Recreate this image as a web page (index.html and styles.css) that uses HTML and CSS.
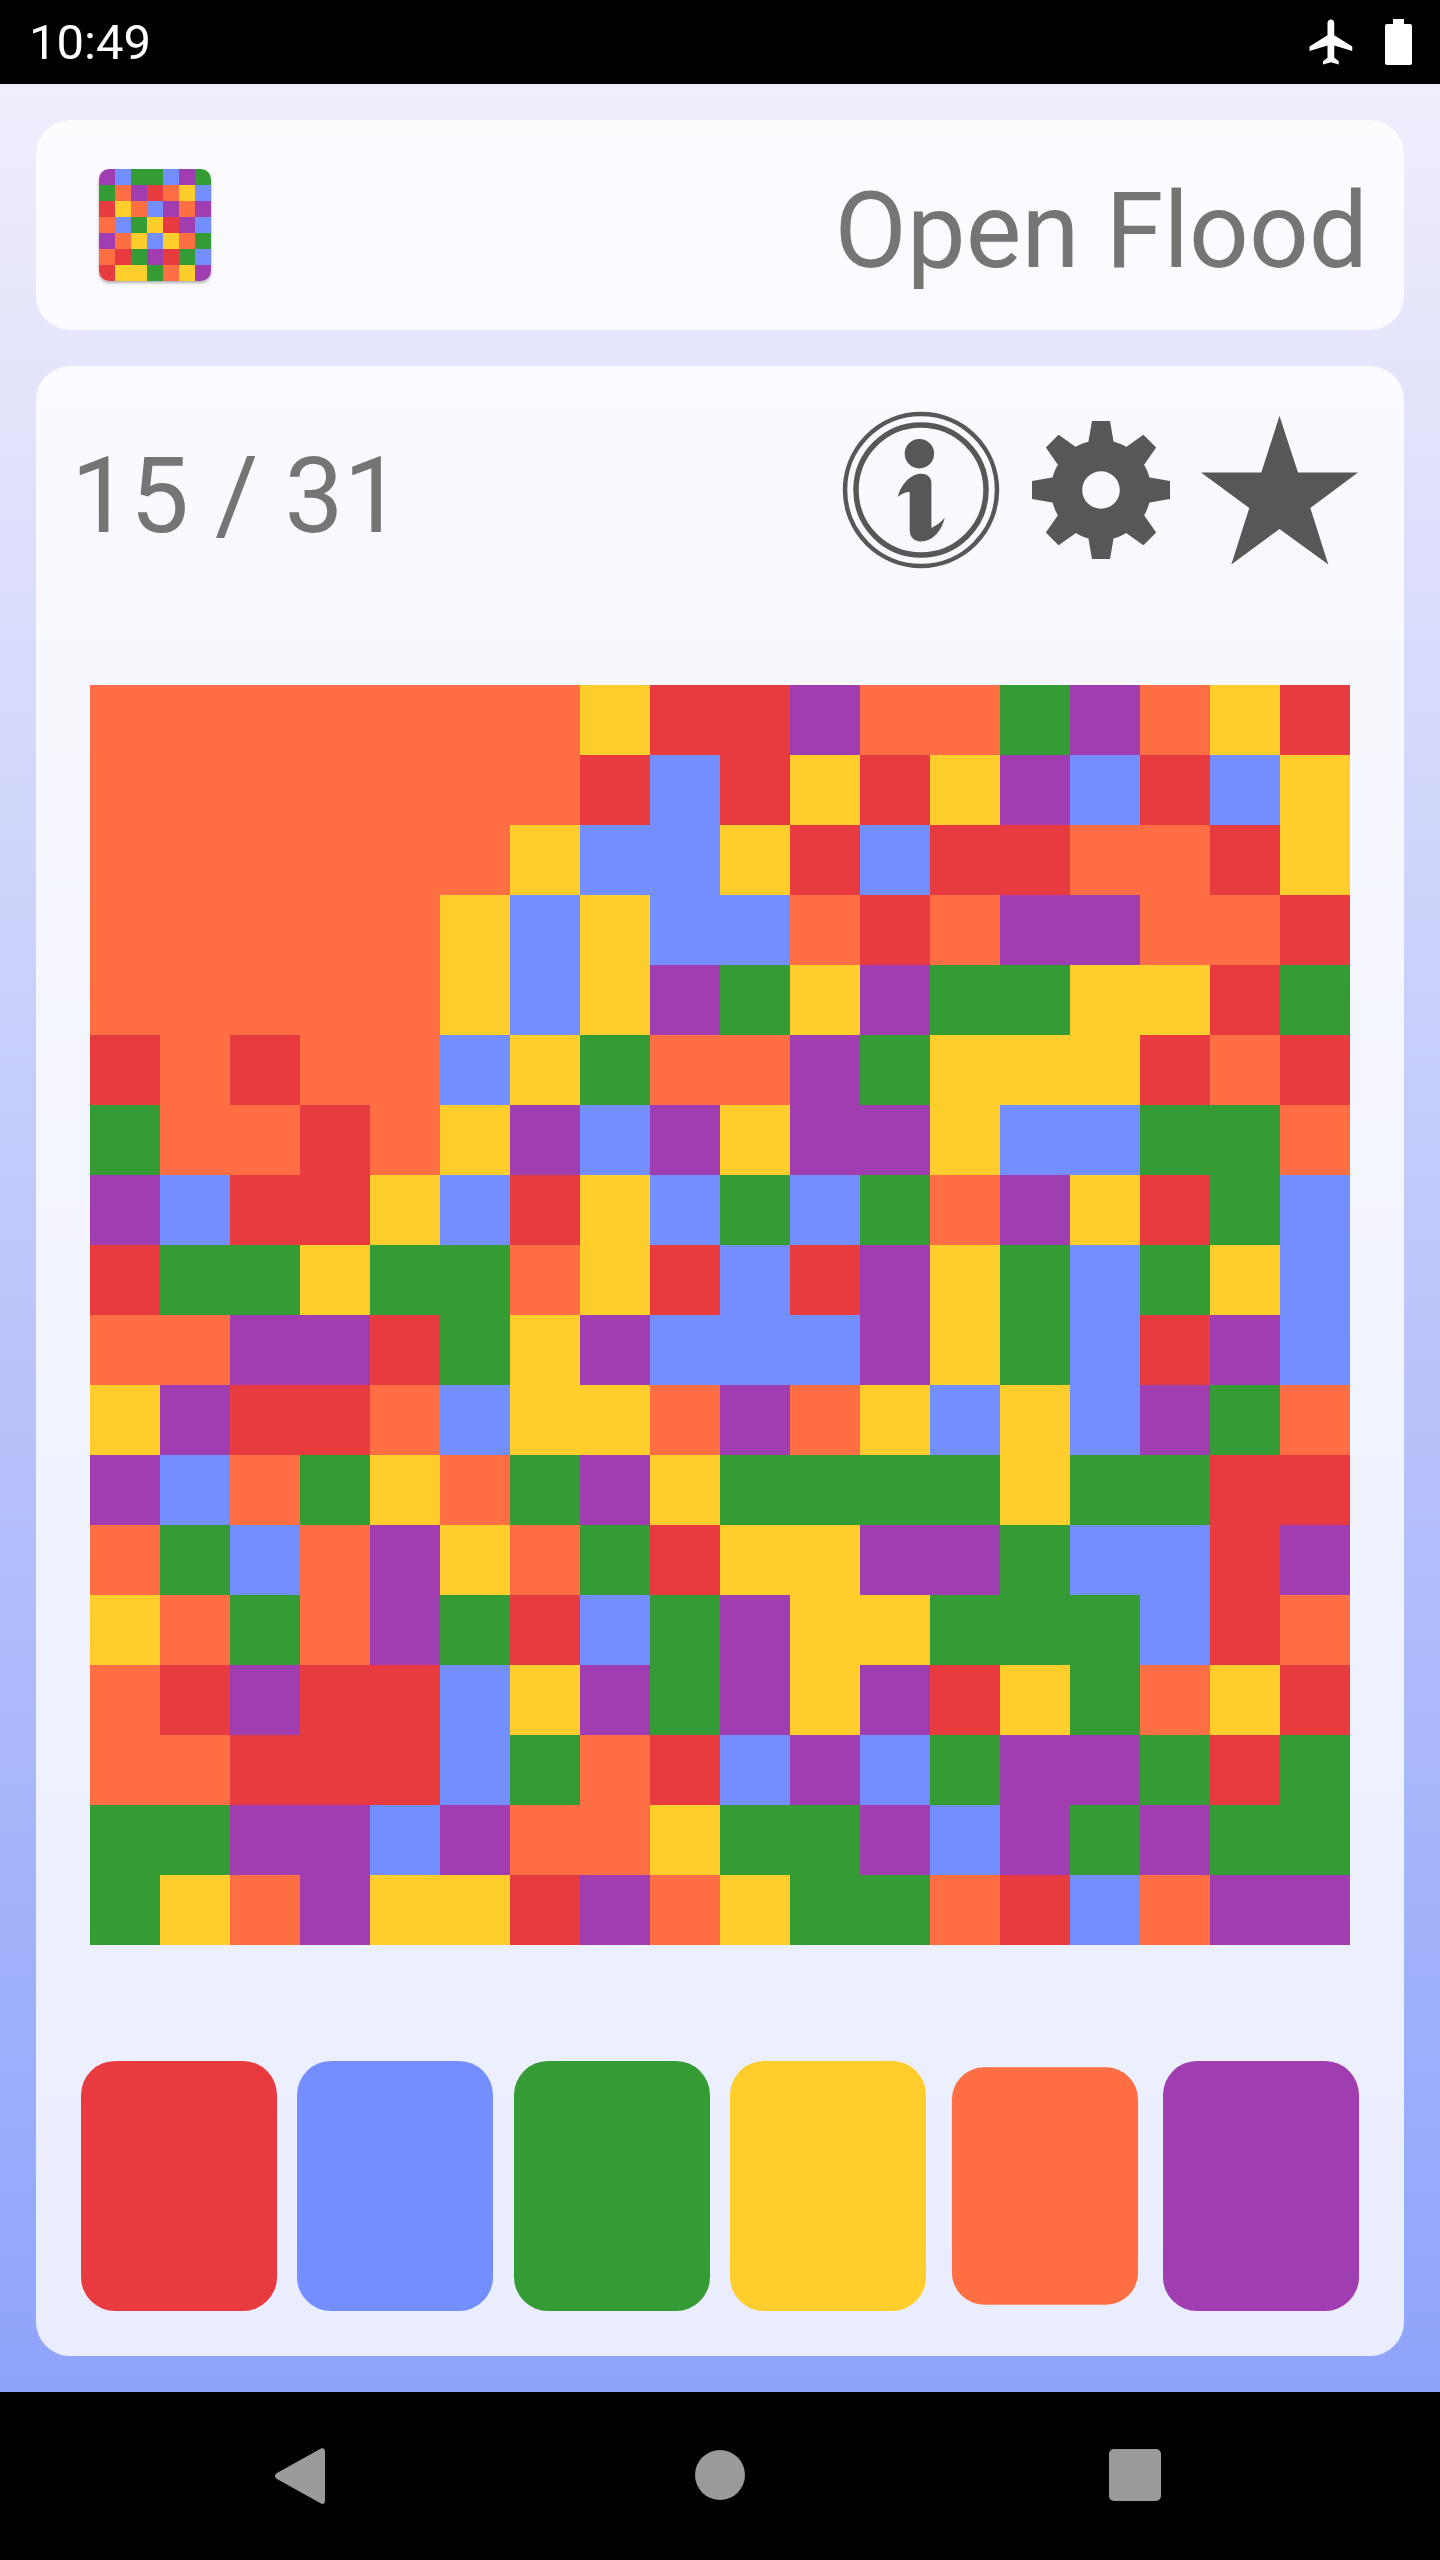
FILE: index.html
```html
<!DOCTYPE html>
<html lang="en">
<head>
    <meta charset="UTF-8">
    <meta name="viewport" content="width=device-width, initial-scale=1.0">
    <title>Open Flood</title>
    <link rel="stylesheet" href="styles.css">
</head>
<body>

    <div class="status-bar">
        <span class="clock">10:49</span>
        <div class="status-icons">
            <svg class="icon-plane" viewBox="0 0 24 24"><path d="M21 16v-2l-8-5V3.5c0-.83-.67-1.5-1.5-1.5S10 2.67 10 3.5V9l-8 5v2l8-2.5V19l-2 1.5V22l3.5-1 3.5 1v-1.5L13 19v-5.5l8 2.5z"/></svg>
            <svg class="icon-battery" viewBox="0 0 27 46"><path d="M8 0h11v5h6a2 2 0 0 1 2 2v37a2 2 0 0 1-2 2H2a2 2 0 0 1-2-2V7a2 2 0 0 1 2-2h6z"/></svg>
        </div>
    </div>

    <main class="screen">
        <header class="card title-card">
            <div class="logo">
                <i class="p"></i><i class="b"></i><i class="g"></i><i class="g"></i><i class="b"></i><i class="p"></i><i class="g"></i>
                <i class="g"></i><i class="o"></i><i class="p"></i><i class="r"></i><i class="o"></i><i class="y"></i><i class="b"></i>
                <i class="r"></i><i class="y"></i><i class="o"></i><i class="b"></i><i class="p"></i><i class="o"></i><i class="p"></i>
                <i class="o"></i><i class="b"></i><i class="g"></i><i class="y"></i><i class="r"></i><i class="p"></i><i class="b"></i>
                <i class="p"></i><i class="o"></i><i class="y"></i><i class="b"></i><i class="y"></i><i class="o"></i><i class="g"></i>
                <i class="o"></i><i class="r"></i><i class="g"></i><i class="p"></i><i class="r"></i><i class="g"></i><i class="b"></i>
                <i class="r"></i><i class="y"></i><i class="y"></i><i class="g"></i><i class="o"></i><i class="y"></i><i class="p"></i>
            </div>
            <h1>Open Flood</h1>
        </header>

        <section class="card game-card">
            <div class="toolbar">
                <span class="moves">15 / 31</span>
                <div class="actions">
                    <!-- info -->
                    <svg class="icon-info" viewBox="0 0 160 160">
                        <circle class="ring ring-outer" cx="80" cy="80" r="76"/>
                        <circle class="ring ring-inner" cx="80" cy="80" r="65"/>
                        <circle cx="78.4" cy="43.7" r="14.7"/>
                        <path d="M56.7 87C60 74 70 63.7 80 63.7c6 0 10.4 3.3 10.4 9.3V118c5.600-3 9.600-6 13.300-10.300C101 120 92 131.400 80 131.400c-7 0-11.300-4.400-11.300-11.400V82c-4.700 0-8.700 2-12 5z"/>
                    </svg>
                    <!-- settings -->
                    <svg class="icon-gear" viewBox="-70 -70 140 140">
                        <path fill-rule="evenodd" d="M-50 0a50 50 0 1 0 100 0a50 50 0 1 0-100 0zM-18.800 0a18.800 18.800 0 1 1 37.600 0a18.800 18.800 0 1 1-37.600 0z"/>
                        <path class="tooth" d="M-9 -69H9L13 -46H-13z"/>
                        <path class="tooth" transform="rotate(45)" d="M-9 -69H9L13 -46H-13z"/>
                        <path class="tooth" transform="rotate(90)" d="M-9 -69H9L13 -46H-13z"/>
                        <path class="tooth" transform="rotate(135)" d="M-9 -69H9L13 -46H-13z"/>
                        <path class="tooth" transform="rotate(180)" d="M-9 -69H9L13 -46H-13z"/>
                        <path class="tooth" transform="rotate(225)" d="M-9 -69H9L13 -46H-13z"/>
                        <path class="tooth" transform="rotate(270)" d="M-9 -69H9L13 -46H-13z"/>
                        <path class="tooth" transform="rotate(315)" d="M-9 -69H9L13 -46H-13z"/>
                    </svg>
                    <!-- star -->
                    <svg class="icon-star" viewBox="0 0 157 149">
                        <path d="M78.500 0L97 56.600H157L109.300 92L127.300 148.500L78.500 113L30.300 148.500L48.300 92L0 56.600H60.300z"/>
                    </svg>
                </div>
            </div>

            <div class="board">
                <span class="o"></span><span class="o"></span><span class="o"></span><span class="o"></span><span class="o"></span><span class="o"></span><span class="o"></span><span class="y"></span><span class="r"></span><span class="r"></span><span class="p"></span><span class="o"></span><span class="o"></span><span class="g"></span><span class="p"></span><span class="o"></span><span class="y"></span><span class="r"></span>
                <span class="o"></span><span class="o"></span><span class="o"></span><span class="o"></span><span class="o"></span><span class="o"></span><span class="o"></span><span class="r"></span><span class="b"></span><span class="r"></span><span class="y"></span><span class="r"></span><span class="y"></span><span class="p"></span><span class="b"></span><span class="r"></span><span class="b"></span><span class="y"></span>
                <span class="o"></span><span class="o"></span><span class="o"></span><span class="o"></span><span class="o"></span><span class="o"></span><span class="y"></span><span class="b"></span><span class="b"></span><span class="y"></span><span class="r"></span><span class="b"></span><span class="r"></span><span class="r"></span><span class="o"></span><span class="o"></span><span class="r"></span><span class="y"></span>
                <span class="o"></span><span class="o"></span><span class="o"></span><span class="o"></span><span class="o"></span><span class="y"></span><span class="b"></span><span class="y"></span><span class="b"></span><span class="b"></span><span class="o"></span><span class="r"></span><span class="o"></span><span class="p"></span><span class="p"></span><span class="o"></span><span class="o"></span><span class="r"></span>
                <span class="o"></span><span class="o"></span><span class="o"></span><span class="o"></span><span class="o"></span><span class="y"></span><span class="b"></span><span class="y"></span><span class="p"></span><span class="g"></span><span class="y"></span><span class="p"></span><span class="g"></span><span class="g"></span><span class="y"></span><span class="y"></span><span class="r"></span><span class="g"></span>
                <span class="r"></span><span class="o"></span><span class="r"></span><span class="o"></span><span class="o"></span><span class="b"></span><span class="y"></span><span class="g"></span><span class="o"></span><span class="o"></span><span class="p"></span><span class="g"></span><span class="y"></span><span class="y"></span><span class="y"></span><span class="r"></span><span class="o"></span><span class="r"></span>
                <span class="g"></span><span class="o"></span><span class="o"></span><span class="r"></span><span class="o"></span><span class="y"></span><span class="p"></span><span class="b"></span><span class="p"></span><span class="y"></span><span class="p"></span><span class="p"></span><span class="y"></span><span class="b"></span><span class="b"></span><span class="g"></span><span class="g"></span><span class="o"></span>
                <span class="p"></span><span class="b"></span><span class="r"></span><span class="r"></span><span class="y"></span><span class="b"></span><span class="r"></span><span class="y"></span><span class="b"></span><span class="g"></span><span class="b"></span><span class="g"></span><span class="o"></span><span class="p"></span><span class="y"></span><span class="r"></span><span class="g"></span><span class="b"></span>
                <span class="r"></span><span class="g"></span><span class="g"></span><span class="y"></span><span class="g"></span><span class="g"></span><span class="o"></span><span class="y"></span><span class="r"></span><span class="b"></span><span class="r"></span><span class="p"></span><span class="y"></span><span class="g"></span><span class="b"></span><span class="g"></span><span class="y"></span><span class="b"></span>
                <span class="o"></span><span class="o"></span><span class="p"></span><span class="p"></span><span class="r"></span><span class="g"></span><span class="y"></span><span class="p"></span><span class="b"></span><span class="b"></span><span class="b"></span><span class="p"></span><span class="y"></span><span class="g"></span><span class="b"></span><span class="r"></span><span class="p"></span><span class="b"></span>
                <span class="y"></span><span class="p"></span><span class="r"></span><span class="r"></span><span class="o"></span><span class="b"></span><span class="y"></span><span class="y"></span><span class="o"></span><span class="p"></span><span class="o"></span><span class="y"></span><span class="b"></span><span class="y"></span><span class="b"></span><span class="p"></span><span class="g"></span><span class="o"></span>
                <span class="p"></span><span class="b"></span><span class="o"></span><span class="g"></span><span class="y"></span><span class="o"></span><span class="g"></span><span class="p"></span><span class="y"></span><span class="g"></span><span class="g"></span><span class="g"></span><span class="g"></span><span class="y"></span><span class="g"></span><span class="g"></span><span class="r"></span><span class="r"></span>
                <span class="o"></span><span class="g"></span><span class="b"></span><span class="o"></span><span class="p"></span><span class="y"></span><span class="o"></span><span class="g"></span><span class="r"></span><span class="y"></span><span class="y"></span><span class="p"></span><span class="p"></span><span class="g"></span><span class="b"></span><span class="b"></span><span class="r"></span><span class="p"></span>
                <span class="y"></span><span class="o"></span><span class="g"></span><span class="o"></span><span class="p"></span><span class="g"></span><span class="r"></span><span class="b"></span><span class="g"></span><span class="p"></span><span class="y"></span><span class="y"></span><span class="g"></span><span class="g"></span><span class="g"></span><span class="b"></span><span class="r"></span><span class="o"></span>
                <span class="o"></span><span class="r"></span><span class="p"></span><span class="r"></span><span class="r"></span><span class="b"></span><span class="y"></span><span class="p"></span><span class="g"></span><span class="p"></span><span class="y"></span><span class="p"></span><span class="r"></span><span class="y"></span><span class="g"></span><span class="o"></span><span class="y"></span><span class="r"></span>
                <span class="o"></span><span class="o"></span><span class="r"></span><span class="r"></span><span class="r"></span><span class="b"></span><span class="g"></span><span class="o"></span><span class="r"></span><span class="b"></span><span class="p"></span><span class="b"></span><span class="g"></span><span class="p"></span><span class="p"></span><span class="g"></span><span class="r"></span><span class="g"></span>
                <span class="g"></span><span class="g"></span><span class="p"></span><span class="p"></span><span class="b"></span><span class="p"></span><span class="o"></span><span class="o"></span><span class="y"></span><span class="g"></span><span class="g"></span><span class="p"></span><span class="b"></span><span class="p"></span><span class="g"></span><span class="p"></span><span class="g"></span><span class="g"></span>
                <span class="g"></span><span class="y"></span><span class="o"></span><span class="p"></span><span class="y"></span><span class="y"></span><span class="r"></span><span class="p"></span><span class="o"></span><span class="y"></span><span class="g"></span><span class="g"></span><span class="o"></span><span class="r"></span><span class="b"></span><span class="o"></span><span class="p"></span><span class="p"></span>
            </div>

            <div class="colors">
                <button class="color r"></button>
                <button class="color b"></button>
                <button class="color g"></button>
                <button class="color y"></button>
                <button class="color o selected"></button>
                <button class="color p"></button>
            </div>
        </section>
    </main>

    <div class="nav-bar">
        <svg class="nav-back" viewBox="0 0 50 56"><path d="M46 0.500c2-1 4 0 4 3V52.500c0 3-2 4-4 3L2 31c-2.700-1.600-2.700-4.400 0-6z"/></svg>
        <span class="nav-home"></span>
        <span class="nav-recent"></span>
    </div>

</body>
</html>
```

FILE: styles.css
```css
/* Page */
* {
    box-sizing: border-box;
}

body {
    margin: 0;
    width: 1440px;
    height: 2560px;
    display: flex;
    flex-direction: column;
    font-family: 'Roboto', sans-serif;
    background: #000;
}

/* Status bar */
.status-bar {
    height: 84px;
    padding: 0 28px 0 29px;
    display: flex;
    justify-content: space-between;
    align-items: center;
    color: #fff;
}

.clock {
    font-size: 49px;
}

.status-icons {
    display: flex;
    align-items: center;
    gap: 26px;
}

.status-icons svg {
    display: block;
    fill: #fff;
}

.icon-plane {
    width: 54px;
    height: 54px;
}

.icon-battery {
    width: 27px;
    height: 46px;
}

/* Main area */
.screen {
    flex: 1;
    padding: 36px;
    display: flex;
    flex-direction: column;
    gap: 36px;
    background: linear-gradient(#f0eefc, #8fa3fb);
}

.card {
    background: rgba(255, 255, 255, 0.8);
    border-radius: 34px;
}

.title-card {
    height: 210px;
    padding: 0 36px 0 63px;
    display: flex;
    justify-content: space-between;
    align-items: center;
}

h1 {
    margin: 0;
    padding-top: 12px;
    font-size: 105px;
    font-weight: 400;
    color: #757575;
}

.logo {
    width: 112px;
    height: 112px;
    display: grid;
    grid-template-columns: repeat(7, 16px);
    grid-auto-rows: 16px;
    border-radius: 10px;
    overflow: hidden;
    box-shadow: 0 2px 3px rgba(0, 0, 0, 0.3);
}

.game-card {
    flex: 1;
    padding: 44px 45px 45px;
    display: flex;
    flex-direction: column;
}

/* Score and icons */
.toolbar {
    display: flex;
    justify-content: space-between;
    align-items: center;
}

.moves {
    margin-left: -10px;
    padding-top: 12px;
    font-size: 105px;
    color: #757575;
}

.actions {
    display: flex;
    align-items: center;
    gap: 30px;
}

.actions svg {
    display: block;
    fill: #575757;
}

.icon-info {
    width: 160px;
    height: 160px;
}

.ring {
    fill: none;
    stroke: #575757;
}

.ring-outer {
    stroke-width: 4.5;
}

.ring-inner {
    stroke-width: 5.5;
}

.icon-gear {
    width: 140px;
    height: 140px;
}

.icon-star {
    width: 157px;
    height: 149px;
    margin-right: 1px;
}

/* Board */
.board {
    width: 1260px;
    height: 1260px;
    margin-top: 115px;
    align-self: center;
    display: grid;
    grid-template-columns: repeat(18, 70px);
    grid-auto-rows: 70px;
}

.r { background: #e83b3f; }
.b { background: #728eff; }
.g { background: #359b35; }
.y { background: #ffcd2c; }
.o { background: #ff6f43; }
.p { background: #a03db0; }

/* Color buttons */
.colors {
    margin-top: auto;
    display: flex;
    gap: 20.5px;
}

.color {
    width: 196px;
    height: 250px;
    padding: 0;
    border: none;
    border-radius: 34px;
}

.color.selected {
    transform: scale(0.95);
}

/* Navigation bar */
.nav-bar {
    height: 168px;
    position: relative;
}

.nav-back,
.nav-home,
.nav-recent {
    position: absolute;
    display: block;
    fill: #9a9a9a;
}

.nav-back {
    left: 275px;
    top: 56px;
    width: 50px;
    height: 56px;
}

.nav-home {
    left: 695px;
    top: 58px;
    width: 50px;
    height: 50px;
    border-radius: 50%;
    background: #9a9a9a;
}

.nav-recent {
    left: 1109px;
    top: 57px;
    width: 52px;
    height: 52px;
    border-radius: 5px;
    background: #9a9a9a;
}
```
